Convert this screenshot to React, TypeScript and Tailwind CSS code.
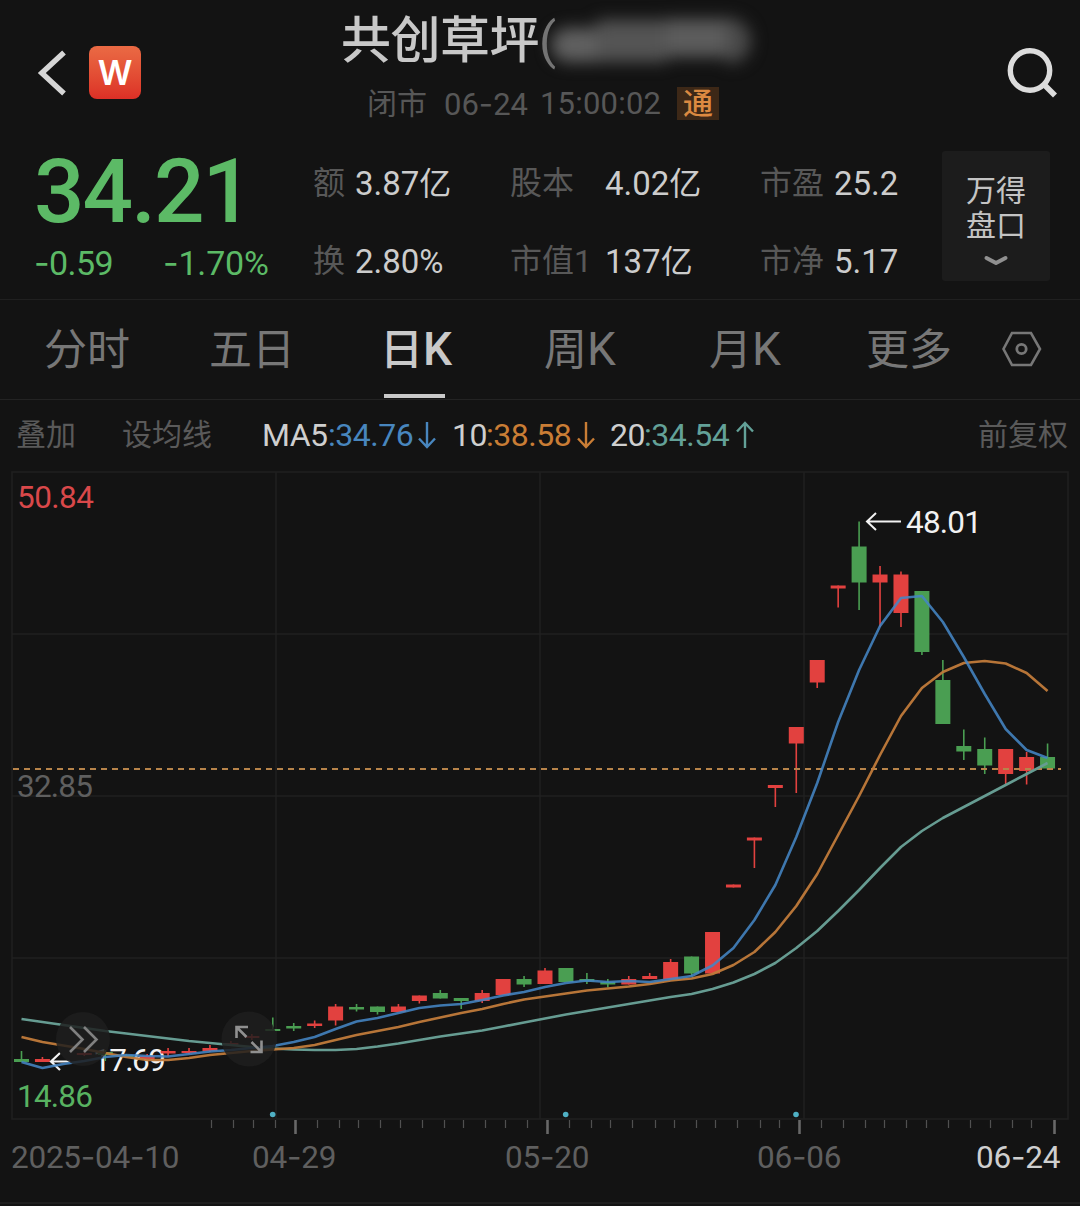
import React, { useState } from "react";

type Candle = {
  up: boolean;
  high: number;
  top: number;
  bottom: number;
  low: number;
};

const RED = "#e2413f";
const GREEN = "#4a9e52";

const STEP = 20.94;
const xAt = (i: number) => 21.5 + i * STEP;

const c = (up: boolean, high: number, top: number, bottom: number, low: number): Candle => ({
  up,
  high,
  top,
  bottom,
  low,
});

// one entry per trading day, in chart pixels
const candles: Candle[] = [
  c(false, 1051, 1059, 1062, 1062),
  c(true, 1057, 1059, 1062, 1062),
  c(true, 1061, 1061, 1062, 1062),
  c(true, 1052, 1053, 1055, 1056),
  c(false, 1050, 1052, 1055, 1061),
  c(false, 1054, 1055, 1057, 1057),
  c(true, 1054, 1056, 1059, 1060),
  c(true, 1048, 1051, 1053.5, 1056),
  c(true, 1048, 1051, 1053, 1054),
  c(true, 1045, 1048, 1051, 1052),
  c(true, 1041, 1043, 1045, 1046),
  c(true, 1034, 1036, 1038, 1040),
  c(false, 1017.5, 1029, 1031, 1031),
  c(false, 1023, 1026, 1028.5, 1031),
  c(true, 1020.5, 1023.5, 1026, 1028),
  c(true, 1004, 1006.5, 1020.5, 1025.5),
  c(false, 1004, 1007, 1009.5, 1011.5),
  c(false, 1006.5, 1006.5, 1012, 1014.5),
  c(true, 1004, 1006.5, 1012, 1012),
  c(true, 995.5, 995.5, 1001, 1003.5),
  c(false, 990, 993, 998.5, 998.5),
  c(false, 998, 998, 1001, 1009),
  c(true, 990, 993, 1001, 1003),
  c(true, 979, 979, 995, 995),
  c(false, 976, 979, 984.5, 987),
  c(true, 968, 970.5, 984, 984),
  c(false, 968, 968, 982, 982),
  c(false, 973, 979, 981.5, 984),
  c(false, 979, 982, 984.5, 987.5),
  c(true, 976, 979, 984.5, 984.5),
  c(true, 973, 976, 979, 979),
  c(true, 959, 962, 979, 979),
  c(false, 956.5, 956.5, 973.5, 976),
  c(true, 932, 932, 973.5, 973.5),
  c(true, 884.5, 884.5, 887.5, 887.5),
  c(true, 837.5, 837.5, 840.5, 868),
  c(true, 785, 785, 788, 807),
  c(true, 727, 727, 743.5, 793),
  c(true, 660, 660, 682.5, 688),
  c(true, 585.5, 585.5, 588.5, 607.5),
  c(false, 521.5, 546.5, 582.5, 610),
  c(true, 566, 574.5, 582.5, 627),
  c(true, 571.5, 574.5, 613, 627),
  c(false, 591, 591, 652, 655),
  c(false, 660, 680, 724, 724),
  c(false, 729.5, 746, 751.5, 760),
  c(false, 737.5, 749, 765.5, 774),
  c(true, 749, 749, 774, 785),
  c(true, 752, 757, 771, 784.5),
  c(false, 743.5, 757, 768.5, 770),
];

const ma5 = [
  1062, 1068, 1064, 1061, 1057, 1055, 1056, 1056.5, 1054, 1051.5, 1050, 1048, 1046, 1042, 1037,
  1029, 1021.5, 1018, 1013, 1008, 1005.5, 1004, 1000, 995.5, 992, 987, 983, 980.5, 982, 981, 982,
  979, 976, 965.5, 948, 920, 885, 837, 783, 722, 670, 626, 598, 596, 622, 657, 694, 729, 750, 758,
];
const ma10 = [
  1037, 1042, 1045.5, 1049, 1053, 1057, 1060, 1060, 1058, 1055, 1053, 1051, 1049.5, 1048, 1045,
  1040, 1035, 1031, 1027, 1022, 1017.5, 1013, 1009, 1004, 999.5, 996.5, 993.5, 990.5, 988.5, 986.5,
  984, 980.5, 978.5, 974, 965, 952, 932, 906, 874, 835, 796, 755, 716, 688, 672, 663, 661, 663.5,
  673, 691,
];
const ma20 = [
  1019, 1022, 1025, 1028, 1031, 1033.5, 1036, 1038.5, 1041, 1043, 1045, 1047, 1048.5, 1049.5, 1050,
  1050, 1049, 1046.5, 1043.5, 1040, 1036.5, 1033.5, 1030.5, 1026.5, 1022.5, 1018.5, 1014.5, 1011,
  1007.5, 1004, 1000.5, 997, 994, 989, 982.5, 974, 963, 948, 931, 911, 890, 868, 847, 831, 818,
  807, 796, 785, 774, 763,
];

const toPoints = (ys: number[]) => ys.map((y, i) => `${xAt(i)},${y}`).join(" ");

const minorTicks = [
  211.5, 233.5, 253.5, 275.5, 317.5, 339.5, 358.5, 380.5, 400.5, 422.5, 444.5, 463.5, 485.5, 505.5,
  527.5, 569.5, 591.5, 610.5, 632.5, 655.5, 674.5, 696.5, 715.5, 737.5, 760.5, 779.5, 821.5, 843.5,
  865.5, 884.5, 906.5, 926.5, 948.5, 970.5, 990.5, 1012.5, 1031.5,
];
const majorTicks = [295.5, 547.5, 799.5, 1054.5];

// Roboto's hyphen is too short next to its figures
function Digits({ children }: { children: string }) {
  return (
    <>
      {children.split("-").map((part, i) => (
        <React.Fragment key={i}>
          {i > 0 && <span className="font-[Inter]">-</span>}
          {part}
        </React.Fragment>
      ))}
    </>
  );
}

function Header() {
  return (
    <header className="flex h-[150px] items-start">
      <svg className="mt-[50px] ml-[37px] h-[46px] w-[30px]" viewBox="0 0 30 46" fill="none">
        <path d="M27 2.5 L4.8 23 L27 43.5" stroke="#d6d6d6" strokeWidth="5.4" />
      </svg>
      <div className="mt-[46px] ml-[22px] flex h-[53px] w-[52px] items-center justify-center rounded-[8px] bg-linear-to-b from-[#ea6a44] to-[#dc2f26] font-[Inter] text-[34px] leading-none font-semibold text-white">
        W
      </div>
      <div className="ml-[200px] w-[460px]">
        <div className="mt-[15px] flex h-[52px] items-center text-[50px] leading-none font-medium text-[#c8c8c8]">
          <span className="tracking-[-0.5px]">共创草坪</span>
          <span className="w-[12px] font-normal text-[#777777]">(</span>
          <div className="flex h-[48px] w-[200px] items-center blur-[8px]">
            <div className="h-[34px] w-[46px] translate-y-[4px] rounded-l-full bg-[#606060]" />
            <div className="h-[42px] w-[70px] bg-[#545454]" />
            <div className="h-[38px] w-[60px] translate-y-[-3px] bg-[#5c5c5c]" />
            <div className="h-[46px] w-[24px] rounded-r-full bg-[#4a4a4a]" />
          </div>
        </div>
        <div className="mt-[20px] ml-[26px] flex h-[33px] items-center text-[31px] leading-none text-[#575757]">
          <span className="w-[77px] text-[30px]">闭市</span>
          <span className="w-[96px]">
            <Digits>06-24</Digits>
          </span>
          <span className="w-[137px] tracking-[0.2px]">15:00:02</span>
          <span className="flex h-[33px] w-[42px] items-center justify-center bg-[#3d2817] text-[30px] font-medium text-[#dc8a41]">
            通
          </span>
        </div>
      </div>
      <svg className="mt-[46px] ml-[204px] h-[54px] w-[54px]" viewBox="0 0 54 54" fill="none">
        <circle cx="25" cy="24.5" r="19.7" stroke="#dcdcdc" strokeWidth="5.4" />
        <path d="M38.5 38 L50 49.5" stroke="#dcdcdc" strokeWidth="5.6" />
      </svg>
    </header>
  );
}

const stats = [
  [
    { label: "额", value: "3.87", unit: "亿" },
    { label: "股本", value: "4.02", unit: "亿" },
    { label: "市盈", value: "25.2", unit: "" },
  ],
  [
    { label: "换", value: "2.80%", unit: "" },
    { label: "市值1", value: "137", unit: "亿" },
    { label: "市净", value: "5.17", unit: "" },
  ],
];

function Quote() {
  return (
    <section className="flex h-[150px] items-start border-b border-[#202020]">
      <div className="w-[313px] pl-[34px] text-[#5cba66]">
        <div className="h-[84px] text-[89px] leading-[84px] font-medium tracking-[-2px]">34.21</div>
        <div className="mt-[9px] flex h-[40px] text-[34px] leading-[40px] tracking-[-0.6px]">
          <span className="w-[129px]">
            <Digits>-0.59</Digits>
          </span>
          <span className="tracking-[-0.2px]">
            <Digits>-1.70%</Digits>
          </span>
        </div>
      </div>
      <div className="mt-[13px] flex w-[629px] flex-col gap-[38px]">
        {stats.map((row, i) => (
          <div
            key={i}
            className="grid h-[40px] grid-cols-[42px_155px_95px_155px_74px_1fr] items-center text-[33px] leading-none text-[#cccccc]"
          >
            {row.map((s) => (
              <React.Fragment key={s.label}>
                <span className="text-[32px] whitespace-nowrap text-[#585858]">{s.label}</span>
                <span>
                  {s.value}
                  <span className="text-[32px]">{s.unit}</span>
                </span>
              </React.Fragment>
            ))}
          </div>
        ))}
      </div>
      <button className="mt-[1px] flex h-[130px] w-[108px] flex-col items-center rounded-[3px] bg-[#1c1c1c] pt-[22px] text-[30px] leading-[35px] text-[#c4c4c4]">
        <span>万得</span>
        <span>盘口</span>
        <svg className="mt-[12px] h-[12px] w-[26px]" viewBox="0 0 26 12" fill="none">
          <path
            d="M3.5 3 L13 8 L22.5 3"
            stroke="#909090"
            strokeWidth="4"
            strokeLinecap="round"
            strokeLinejoin="round"
          />
        </svg>
      </button>
    </section>
  );
}

const tabs = [
  { name: "分时", style: "w-[165px]" },
  { name: "五日", style: "w-[171px]" },
  { name: "日K", style: "w-[164px]" },
  { name: "周K", style: "w-[165px]" },
  { name: "月K", style: "w-[157px]" },
  { name: "更多", style: "w-[136px]" },
];

function Tabs() {
  const [active, setActive] = useState("日K");

  return (
    <nav className="flex h-[100px] items-start border-b border-[#232323] pl-[44px] text-[43px] leading-[98px]">
      {tabs.map((tab) => (
        <button
          key={tab.name}
          onClick={() => setActive(tab.name)}
          className={`relative h-[99px] text-left ${tab.style} ${
            tab.name === active ? "font-medium text-[#c9c9c9]" : "text-[#777777]"
          }`}
        >
          {tab.name.replace("K", "")}
          {tab.name.endsWith("K") && <span className="text-[46px]">K</span>}
          {tab.name === active && (
            <span className="absolute bottom-[1px] left-[4px] h-[4px] w-[61px] bg-[#c9c9c9]" />
          )}
        </button>
      ))}
      <svg className="mt-[30px] h-[38px] w-[42px]" viewBox="0 0 42 38" fill="none" stroke="#777777">
        <path d="M10 3 H29 L38 19 L29 35 H10 L1.5 19 Z" strokeWidth="2.6" />
        <circle cx="19.5" cy="19" r="4.7" strokeWidth="2.8" />
      </svg>
    </nav>
  );
}

function Arrow({ up = false }: { up?: boolean }) {
  return (
    <svg
      className={up ? "h-[28px] w-[20px]" : "h-[28px] w-[20px] rotate-180"}
      viewBox="0 0 20 28"
      fill="none"
      stroke="currentColor"
      strokeWidth="2.4"
    >
      <path d="M10 27 V2 M2 10.5 L10 2 L18 10.5" />
    </svg>
  );
}

function Averages() {
  return (
    <div className="flex h-[70px] items-center pl-[16px] text-[32px] leading-none tracking-[-0.5px] text-[#cfcfcf]">
      <span className="w-[106px] text-[30px] tracking-normal text-[#5a5a5a]">叠加</span>
      <span className="w-[140px] text-[30px] tracking-normal text-[#5a5a5a]">设均线</span>
      <span className="w-[66px]">MA5</span>
      <span className="w-[89px] text-[#4886be]">:34.76</span>
      <span className="w-[35px] text-[#4886be]">
        <Arrow />
      </span>
      <span className="w-[34px]">10</span>
      <span className="w-[90px] text-[#c97d35]">:38.58</span>
      <span className="w-[34px] text-[#c97d35]">
        <Arrow />
      </span>
      <span className="w-[34px]">20</span>
      <span className="w-[91px] text-[#63a198]">:34.54</span>
      <span className="text-[#63a198]">
        <Arrow up />
      </span>
      <span className="ml-auto pr-[12px] text-[30px] tracking-normal text-[#5a5a5a]">前复权</span>
    </div>
  );
}

function Chart() {
  return (
    <svg className="block h-[668px] w-[1080px]" viewBox="0 470 1080 668" fill="none">
      {/* grid */}
      <g stroke="#202020" strokeWidth="1.6">
        <rect x="12" y="472" width="1056" height="647" />
        <path d="M276 472 V1119 M540 472 V1119 M804 472 V1119" />
        <path d="M12 634 H1068 M12 796 H1068 M12 958 H1068" />
      </g>

      <g stroke="#505050" strokeWidth="1.2">
        {minorTicks.map((x) => (
          <path key={x} d={`M${x} 1120 V1128`} />
        ))}
      </g>
      <g stroke="#686868" strokeWidth="2.6">
        {majorTicks.map((x) => (
          <path key={x} d={`M${x} 1120 V1134`} />
        ))}
      </g>

      <g fontSize="31.5">
        <text x="17" y="508" textLength="77" fill="#d9484a">
          50.84
        </text>
        <text x="17" y="797" textLength="76" fill="#5f5f5f">
          32.85
        </text>
        <text x="17" y="1107" textLength="76" fill="#58b261">
          14.86
        </text>
        <text x="906" y="532.5" textLength="76" fill="#f2f2f2">
          48.01
        </text>
        <text x="93" y="1071" textLength="73" fill="#f2f2f2">
          17.69
        </text>
      </g>

      {candles.map((k, i) => (
        <g key={i} fill={k.up ? RED : GREEN}>
          <rect x={xAt(i) - 0.8} y={k.high} width="1.6" height={k.low - k.high} />
          <rect x={xAt(i) - 7.5} y={k.top} width="15" height={k.bottom - k.top} />
        </g>
      ))}

      {/* high and low markers */}
      <path d="M901 521.5 H867 M876 513 L867 521.5 L876 530" stroke="#f2f2f2" strokeWidth="2" />
      <path d="M70 1061.5 H51 M60 1053 L51 1061.5 L60 1070" stroke="#f2f2f2" strokeWidth="2.2" />

      <path d="M13 769 H1061" stroke="#b8844a" strokeWidth="1.8" strokeDasharray="6 5" />

      <g strokeWidth="2.6" strokeLinejoin="round">
        <polyline points={toPoints(ma20)} stroke="#669c92" />
        <polyline points={toPoints(ma10)} stroke="#c07a3a" strokeOpacity="0.95" />
        <polyline points={toPoints(ma5)} stroke="#4485c4" strokeOpacity="0.88" />
      </g>

      {[272.7, 565.7, 796].map((x) => (
        <circle key={x} cx={x} cy="1114.5" r="2.8" fill="#4fb0c4" />
      ))}

      {/* floating controls */}
      <circle cx="83" cy="1039" r="27" fill="#1e1e1e" fillOpacity="0.84" />
      <path
        d="M70 1027 L82.5 1039.5 L70 1052 M84 1027 L96.5 1039.5 L84 1052"
        stroke="#808080"
        strokeWidth="2.6"
      />
      <circle cx="249" cy="1039" r="27.5" fill="#1e1e1e" fillOpacity="0.84" />
      <path
        d="M236.5 1038 V1027 H248 M237 1027.5 L246.5 1037 M250.5 1052 H261.5 V1040.5 M261 1051.5 L251.5 1042"
        stroke="#909090"
        strokeWidth="2.6"
      />
    </svg>
  );
}

export default function App() {
  return (
    <main className="h-[1206px] w-[1080px] overflow-hidden bg-[#131313] font-['Roboto','Noto_Sans_CJK_SC',sans-serif]">
      <Header />
      <Quote />
      <Tabs />
      <Averages />
      <Chart />
      <div className="flex h-[66px] border-b-2 border-[#1e1e1e] pl-[11px] text-[31.5px] leading-[38px] tracking-[-0.25px] text-[#5f5f5f]">
        <span className="w-[241px]">
          <Digits>2025-04-10</Digits>
        </span>
        <span className="w-[253px]">
          <Digits>04-29</Digits>
        </span>
        <span className="w-[252px]">
          <Digits>05-20</Digits>
        </span>
        <span className="w-[219px]">
          <Digits>06-06</Digits>
        </span>
        <span className="text-[#cfcfcf]">
          <Digits>06-24</Digits>
        </span>
      </div>
    </main>
  );
}
